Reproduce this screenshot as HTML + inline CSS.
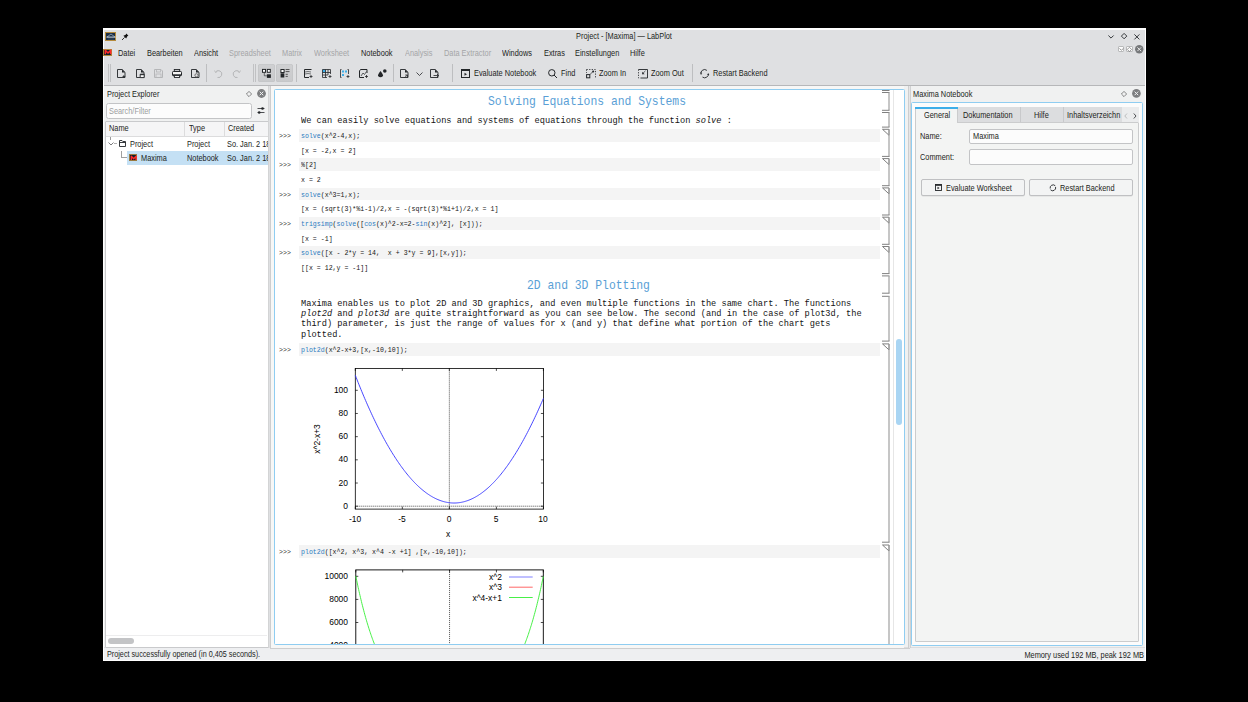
<!DOCTYPE html>
<html><head><meta charset="utf-8">
<style>
*{margin:0;padding:0;box-sizing:border-box}
html,body{width:1248px;height:702px;overflow:hidden;background:#000}
body{position:relative;font-family:"Liberation Sans",sans-serif;font-size:7.4px;color:#232629}
.a{position:absolute}
.t{position:absolute;white-space:pre;line-height:1}
.m{font-family:"Liberation Mono",monospace}
svg{position:absolute;overflow:visible}
</style></head><body>
<div class="a" style="left:103px;top:28px;width:1043px;height:633px;background:#ffffff;"></div>
<div class="a" style="left:104px;top:30px;width:1041px;height:55px;background:#dfe0e2;"></div>
<div class="a" style="left:104px;top:85px;width:1041px;height:1px;background:#b6b7b9;"></div>
<div class="a" style="left:104px;top:86px;width:1041px;height:561px;background:#f0f1f1;"></div>
<div class="a" style="left:104px;top:647px;width:1041px;height:1px;background:#dcdddf;"></div>
<div class="a" style="left:104px;top:648px;width:1041px;height:12px;background:#eeeff1;"></div>
<div class="a" style="left:105.3px;top:31.9px;width:10.8px;height:8.9px;background:#1d2f46;border:0.8px solid #b48a3c"></div>
<svg style="left:106px;top:32.5px;" width="10" height="8" viewBox="0 0 10 8"><path d="M1 4 L5 1 L9 4" fill="none" stroke="#9fb8d0" stroke-width="0.7"/><path d="M0.5 4.1 H9.5" stroke="#e8eef4" stroke-width="0.9"/><path d="M2 6 H8" stroke="#4a6079" stroke-width="0.5"/></svg>
<svg style="left:120.5px;top:32.5px;" width="8" height="8" viewBox="0 0 8 8"><path d="M5.3 0.6 L7.4 2.7 L6.3 3.3 L5.2 5.6 L2.4 2.8 L4.7 1.7 Z" fill="#111"/><path d="M3.6 4.4 L1 7" stroke="#222" stroke-width="0.9"/></svg>
<div class="t" style="left:624px;top:33.20px;font-size:8.2px;color:#1c1e21;transform-origin:50% 0;transform:translateX(-50%) scaleX(0.9);">Project - [Maxima] — LabPlot</div>
<svg style="left:1108px;top:34.6px;" width="7" height="5" viewBox="0 0 7 5"><path d="M0.4 0.5 L3 3.1 L5.6 0.5" fill="none" stroke="#232629" stroke-width="0.9"/></svg>
<svg style="left:1120.9px;top:33px;" width="7" height="7" viewBox="0 0 7 7"><path d="M3.1 0.4 L5.8 3.1 L3.1 5.8 L0.4 3.1 Z" fill="none" stroke="#232629" stroke-width="0.9"/></svg>
<svg style="left:1134.4px;top:33.7px;" width="7" height="7" viewBox="0 0 7 7"><path d="M0.4 0.4 L5.4 5.4 M5.4 0.4 L0.4 5.4" fill="none" stroke="#232629" stroke-width="0.9"/></svg>
<div class="a" style="left:103.2px;top:48.9px;width:8.8px;height:7.3px;background:#10202a;border:0.8px solid #b08a3c"></div>
<svg style="left:104.8px;top:50.3px;" width="6" height="5" viewBox="0 0 6 5"><path d="M0.3 4.3 V0.3 L3 3 L5.7 0.3 V4.3" fill="none" stroke="#ff2a2a" stroke-width="1.5" stroke-linejoin="round"/></svg>
<div class="t" style="left:117.6px;top:49.70px;font-size:8.2px;color:#1c1e21;transform-origin:0 0;transform:scaleX(0.9);">Datei</div>
<div class="t" style="left:146.5px;top:49.70px;font-size:8.2px;color:#1c1e21;transform-origin:0 0;transform:scaleX(0.9);">Bearbeiten</div>
<div class="t" style="left:193.7px;top:49.70px;font-size:8.2px;color:#1c1e21;transform-origin:0 0;transform:scaleX(0.9);">Ansicht</div>
<div class="t" style="left:229px;top:49.70px;font-size:8.2px;color:#a4a5a7;transform-origin:0 0;transform:scaleX(0.9);">Spreadsheet</div>
<div class="t" style="left:282px;top:49.70px;font-size:8.2px;color:#a4a5a7;transform-origin:0 0;transform:scaleX(0.9);">Matrix</div>
<div class="t" style="left:314px;top:49.70px;font-size:8.2px;color:#a4a5a7;transform-origin:0 0;transform:scaleX(0.9);">Worksheet</div>
<div class="t" style="left:361px;top:49.70px;font-size:8.2px;color:#1c1e21;transform-origin:0 0;transform:scaleX(0.9);">Notebook</div>
<div class="t" style="left:405px;top:49.70px;font-size:8.2px;color:#a4a5a7;transform-origin:0 0;transform:scaleX(0.9);">Analysis</div>
<div class="t" style="left:443.5px;top:49.70px;font-size:8.2px;color:#a4a5a7;transform-origin:0 0;transform:scaleX(0.9);">Data Extractor</div>
<div class="t" style="left:502px;top:49.70px;font-size:8.2px;color:#1c1e21;transform-origin:0 0;transform:scaleX(0.9);">Windows</div>
<div class="t" style="left:543.5px;top:49.70px;font-size:8.2px;color:#1c1e21;transform-origin:0 0;transform:scaleX(0.9);">Extras</div>
<div class="t" style="left:574.6px;top:49.70px;font-size:8.2px;color:#1c1e21;transform-origin:0 0;transform:scaleX(0.9);">Einstellungen</div>
<div class="t" style="left:630.4px;top:49.70px;font-size:8.2px;color:#1c1e21;transform-origin:0 0;transform:scaleX(0.9);">Hilfe</div>
<div class="a" style="left:1117.5px;top:45.6px;width:6.8px;height:6.9px;background:#fdfdfd;border:0.7px solid #b9babb;border-radius:1px"></div>
<svg style="left:1118.6px;top:47.6px;" width="5" height="3" viewBox="0 0 5 3"><path d="M0.4 0.5 L2.4 2.2 L4.4 0.5" fill="none" stroke="#808080" stroke-width="0.8"/></svg>
<div class="a" style="left:1126.2px;top:45.6px;width:6.9px;height:6.9px;background:#fdfdfd;border:0.7px solid #b9babb;border-radius:1px"></div>
<svg style="left:1127.2px;top:46.5px;" width="5" height="5" viewBox="0 0 5 5"><path d="M2.45 0.3 L4.6 2.45 L2.45 4.6 L0.3 2.45 Z" fill="none" stroke="#808080" stroke-width="0.8"/></svg>
<svg style="left:1135.2px;top:44.6px;" width="9" height="9" viewBox="0 0 9 9"><circle cx="4.25" cy="4.2" r="4.2" fill="#76787a"/><path d="M2.4 2.4 L6.1 6.1 M6.1 2.4 L2.4 6.1" stroke="#e8e8e8" stroke-width="1"/></svg>
<div class="a" style="left:108px;top:64px;width:1px;height:18px;background:#c0c1c3;"></div>
<div class="a" style="left:110px;top:64px;width:1px;height:18px;background:#c0c1c3;"></div>
<svg style="left:117px;top:69px;" width="9" height="9" viewBox="0 0 9 9"><path d="M0.5 0.5 H5.2 L8 3.3 V8.5 H0.5 Z" fill="none" stroke="#232629" stroke-width="0.9"/><path d="M5 0.5 L8 3.5 H5 Z" fill="#232629"/><path d="M6.8 6.2 V8.8 M5.5 7.5 H8.1" stroke="#232629" stroke-width="0.8"/></svg>
<svg style="left:135.8px;top:69px;" width="9" height="9" viewBox="0 0 9 9"><path d="M0.5 0.5 H5.2 L8 3.3 V8.5 H0.5 Z" fill="none" stroke="#232629" stroke-width="0.9"/><path d="M5 0.5 L8 3.5 H5 Z" fill="#232629"/><path d="M4.2 5.2 H8.2 V8.6 H4.2 Z" fill="#fff" stroke="#232629" stroke-width="0.9"/><path d="M4.2 5.2 H8.2 V6.2 H4.2 Z" fill="#232629"/></svg>
<svg style="left:153.5px;top:69px;" width="9" height="9" viewBox="0 0 9 9"><path d="M0.5 0.5 H7 L8.5 2 V8.5 H0.5 Z" fill="none" stroke="#b5b6b8" stroke-width="1"/><rect x="2.5" y="0.5" width="4" height="2.5" fill="none" stroke="#b5b6b8" stroke-width="0.8"/><rect x="2" y="5" width="5" height="3.5" fill="none" stroke="#b5b6b8" stroke-width="0.8"/></svg>
<svg style="left:171.7px;top:69px;" width="10" height="9" viewBox="0 0 10 9"><rect x="2.3" y="0.5" width="5.4" height="1.8" fill="none" stroke="#232629" stroke-width="0.9"/><rect x="0.5" y="2.5" width="9" height="4.3" fill="#f4f4f4" stroke="#232629" stroke-width="1" rx="0.8"/><rect x="1" y="5.3" width="8" height="1.6" fill="#232629"/><rect x="2.4" y="6.6" width="5.2" height="1.9" fill="#fff" stroke="#232629" stroke-width="0.9"/></svg>
<svg style="left:191px;top:69px;" width="9" height="9" viewBox="0 0 9 9"><path d="M0.5 0.5 H5.2 L8 3.3 V8.5 H0.5 Z" fill="none" stroke="#232629" stroke-width="0.9"/><path d="M5 0.5 L8 3.5 H5 Z" fill="#232629"/><circle cx="5.5" cy="6.3" r="1.6" fill="none" stroke="#555" stroke-width="0.8"/></svg>
<div class="a" style="left:206px;top:64px;width:1px;height:18px;background:#bdbec0;"></div>
<svg style="left:214px;top:69.5px;" width="8" height="8" viewBox="0 0 8 8"><path d="M1.5 2 A3.5 3.5 0 1 1 3.5 7.5" fill="none" stroke="#b5b6b8" stroke-width="1"/><path d="M0.5 0.5 L1.5 2.5 L3.5 1.5" fill="none" stroke="#b5b6b8" stroke-width="0.8"/></svg>
<svg style="left:232.5px;top:69.5px;" width="8" height="8" viewBox="0 0 8 8"><path d="M6.5 2 A3.5 3.5 0 1 0 4.5 7.5" fill="none" stroke="#b5b6b8" stroke-width="1"/><path d="M7.5 0.5 L6.5 2.5 L4.5 1.5" fill="none" stroke="#b5b6b8" stroke-width="0.8"/></svg>
<div class="a" style="left:253px;top:64px;width:1px;height:18px;background:#c0c1c3;"></div>
<div class="a" style="left:255px;top:64px;width:1px;height:18px;background:#c0c1c3;"></div>
<div class="a" style="left:258.2px;top:64.3px;width:16.4px;height:17.4px;background:linear-gradient(#cfd0d2,#c9cacc);border-radius:2.5px;box-shadow:inset 0 0 0 0.6px #c2c3c5"></div>
<div class="a" style="left:276.2px;top:64.3px;width:17.2px;height:17.4px;background:linear-gradient(#cfd0d2,#c9cacc);border-radius:2.5px;box-shadow:inset 0 0 0 0.6px #c2c3c5"></div>
<svg style="left:262px;top:69px;" width="10" height="9" viewBox="0 0 10 9"><rect x="0.5" y="0.4" width="3" height="2.9" fill="#fff" stroke="#232629" stroke-width="1"/><rect x="5.3" y="0.4" width="3" height="2.9" fill="#fff" stroke="#232629" stroke-width="1"/><rect x="4.9" y="5.3" width="4" height="3.6" fill="#232629"/><path d="M2.3 3.4 V6.8 H4.9" fill="none" stroke="#232629" stroke-width="0.6"/></svg>
<svg style="left:280px;top:69px;" width="10" height="9" viewBox="0 0 10 9"><rect x="0.9" y="0.5" width="3.2" height="3" fill="#fff" stroke="#232629" stroke-width="1"/><rect x="0.6" y="4.3" width="3.7" height="4.2" fill="#232629"/><path d="M5.6 0.5 H9.5 M5.6 2.6 H9.5 M5.6 5.3 H7.8 M5.6 7.4 H7.8" stroke="#333" stroke-width="0.8"/></svg>
<div class="a" style="left:296px;top:64px;width:1px;height:18px;background:#bdbec0;"></div>
<svg style="left:303px;top:69px;" width="10" height="9" viewBox="0 0 10 9"><path d="M1.5 0.5 H8.5 M1.5 0.5 V8.5 H6" fill="none" stroke="#232629" stroke-width="1"/><path d="M2 3 Q5 2 8 3 M2 5 Q5 4 8 5" fill="none" stroke="#232629" stroke-width="0.6"/><path d="M8 6 V9 M6.5 7.5 H9.5" stroke="#232629" stroke-width="0.8"/></svg>
<svg style="left:321.5px;top:69px;" width="10" height="9" viewBox="0 0 10 9"><rect x="0.5" y="0.5" width="3" height="3" fill="#3daee9"/><path d="M0.5 0.5 H8.5 V5 M0.5 0.5 V8.5 H5 M0.5 3.5 H8.5 M0.5 6 H6 M3.5 0.5 V8.5 M6 0.5 V6" fill="none" stroke="#232629" stroke-width="0.8"/><path d="M8 6 V9 M6.5 7.5 H9.5" stroke="#232629" stroke-width="0.8"/></svg>
<svg style="left:340px;top:69px;" width="10" height="9" viewBox="0 0 10 9"><path d="M1.5 0.5 H0.5 V8.5 H1.5 M7.5 0.5 H8.5 V5" fill="none" stroke="#232629" stroke-width="0.8"/><rect x="2" y="1.5" width="2" height="2" fill="#3daee9"/><rect x="5" y="1.5" width="2" height="2" fill="#3daee9"/><rect x="2" y="5" width="2" height="2" fill="#3daee9"/><path d="M8 6 V9 M6.5 7.5 H9.5" stroke="#232629" stroke-width="0.8"/></svg>
<svg style="left:358px;top:69px;" width="10" height="9" viewBox="0 0 10 9"><path d="M1.5 8.5 V2 L2.5 0.5 H9 V4 M1.5 8.5 H6" fill="none" stroke="#232629" stroke-width="1"/><path d="M3 7 L5 4 L6.5 5.5 L8.5 2.5" fill="none" stroke="#232629" stroke-width="0.7"/><path d="M8.5 6 V9 M7 7.5 H10" stroke="#232629" stroke-width="0.8"/></svg>
<svg style="left:376.5px;top:69px;" width="10" height="9" viewBox="0 0 10 9"><path d="M3.5 2 Q0.5 6 1 7 Q3.5 9.5 6 7 Q6.5 6 3.5 2 Z" fill="#232629"/><circle cx="7.8" cy="2" r="1.8" fill="#232629"/></svg>
<div class="a" style="left:393px;top:64px;width:1px;height:18px;background:#bdbec0;"></div>
<svg style="left:400px;top:69px;" width="9" height="9" viewBox="0 0 9 9"><path d="M0.5 0.5 H5.2 L8 3.3 V8.5 H0.5 Z" fill="none" stroke="#232629" stroke-width="0.9"/><path d="M5 0.5 L8 3.5 H5 Z" fill="#232629"/><path d="M4.5 8.8 L7.5 5.8 M5.2 6 H7.5 V8.2" fill="none" stroke="#232629" stroke-width="0.8"/></svg>
<svg style="left:416px;top:71.5px;" width="7" height="4" viewBox="0 0 7 4"><path d="M0.5 0.5 L3.5 3.5 L6.5 0.5" fill="none" stroke="#232629" stroke-width="0.8"/></svg>
<svg style="left:429.5px;top:69px;" width="9" height="9" viewBox="0 0 9 9"><path d="M0.5 0.5 H5.2 L8 3.3 V8.5 H0.5 Z" fill="none" stroke="#232629" stroke-width="0.9"/><path d="M5 0.5 L8 3.5 H5 Z" fill="#232629"/><path d="M3.5 6.5 H8.5 M7 5 L8.5 6.5 L7 8" fill="none" stroke="#232629" stroke-width="0.8"/></svg>
<div class="a" style="left:452px;top:64px;width:1px;height:18px;background:#bdbec0;"></div>
<svg style="left:461px;top:69px;" width="9" height="9" viewBox="0 0 9 9"><rect x="0.5" y="0.5" width="8" height="8" fill="none" stroke="#232629" stroke-width="1"/><rect x="0.5" y="0.5" width="8" height="1.5" fill="#232629"/><path d="M3.5 3.8 L6 5.3 L3.5 6.8 Z" fill="#232629"/></svg>
<div class="t" style="left:474px;top:69.80px;font-size:8.2px;color:#1c1e21;transform-origin:0 0;transform:scaleX(0.9);">Evaluate Notebook</div>
<svg style="left:547.5px;top:69px;" width="10" height="10" viewBox="0 0 10 10"><circle cx="3.8" cy="3.8" r="3.2" fill="none" stroke="#232629" stroke-width="1"/><path d="M6 6 L9 9" stroke="#232629" stroke-width="1"/></svg>
<div class="t" style="left:560.6px;top:69.80px;font-size:8.2px;color:#1c1e21;transform-origin:0 0;transform:scaleX(0.9);">Find</div>
<svg style="left:586px;top:69px;" width="10" height="10" viewBox="0 0 10 10"><path d="M0.5 0.5 H9.5 V9" fill="none" stroke="#232629" stroke-width="0.8" stroke-dasharray="1.3,1.3"/><path d="M0.5 0.5 V4" fill="none" stroke="#232629" stroke-width="0.8" stroke-dasharray="1.3,1.3"/><rect x="0.6" y="5.6" width="3.2" height="3.2" fill="none" stroke="#232629" stroke-width="1"/><path d="M4.2 5.2 L7 2.6" stroke="#232629" stroke-width="0.7"/><circle cx="7.2" cy="2.5" r="1" fill="#232629"/></svg>
<div class="t" style="left:599px;top:69.80px;font-size:8.2px;color:#1c1e21;transform-origin:0 0;transform:scaleX(0.9);">Zoom In</div>
<svg style="left:638px;top:69px;" width="10" height="10" viewBox="0 0 10 10"><path d="M0.5 0.5 H9.5 V9 H3" fill="none" stroke="#232629" stroke-width="0.9"/><path d="M0.5 0.5 V9 H3" fill="none" stroke="#232629" stroke-width="0.8" stroke-dasharray="1.3,1.3"/><path d="M7.5 1.8 L4.6 4.7" stroke="#232629" stroke-width="0.7"/><path d="M4.2 2.8 V5.2 H6.6 Z" fill="#232629"/></svg>
<div class="t" style="left:651px;top:69.80px;font-size:8.2px;color:#1c1e21;transform-origin:0 0;transform:scaleX(0.9);">Zoom Out</div>
<div class="a" style="left:692px;top:64px;width:1px;height:18px;background:#bdbec0;"></div>
<svg style="left:700px;top:68.8px;" width="10" height="10" viewBox="0 0 10 10"><path d="M1.1 5.6 A3.7 3.7 0 0 1 6.9 1.4" fill="none" stroke="#232629" stroke-width="0.9"/><path d="M8.3 4.4 A3.7 3.7 0 0 1 2.5 8.1" fill="none" stroke="#232629" stroke-width="0.9"/><path d="M7.2 5 L8.3 6.6 L9.3 5 Z" fill="#232629"/><path d="M0.2 4.6 L1.1 3 L2.2 4.6 Z" fill="#232629"/></svg>
<div class="t" style="left:713px;top:69.80px;font-size:8.2px;color:#1c1e21;transform-origin:0 0;transform:scaleX(0.9);">Restart Backend</div>
<div class="t" style="left:107px;top:91.00px;font-size:8.2px;color:#1c1e21;transform-origin:0 0;transform:scaleX(0.9);">Project Explorer</div>
<svg style="left:245.5px;top:90.6px;" width="6" height="6" viewBox="0 0 6 6"><path d="M3 0.4 L5.6 3 L3 5.6 L0.4 3 Z" fill="none" stroke="#3a3b3d" stroke-width="0.6"/></svg>
<svg style="left:256.5px;top:89px;" width="9" height="9" viewBox="0 0 9 9"><circle cx="4.5" cy="4.5" r="4.4" fill="#7d7e80"/><path d="M2.7 2.7 L6.3 6.3 M6.3 2.7 L2.7 6.3" stroke="#eff0f1" stroke-width="1"/></svg>
<div class="a" style="left:105.5px;top:102.5px;width:146px;height:16px;background:#fcfcfc;border:1px solid #c3c4c6;border-radius:2.5px"></div>
<div class="t" style="left:108.7px;top:107.60px;font-size:8.2px;color:#9b9c9e;transform-origin:0 0;transform:scaleX(0.9);">Search/Filter</div>
<svg style="left:256.5px;top:107px;" width="8" height="8" viewBox="0 0 8 8"><path d="M0.5 1.5 H7.5 M0.5 5.5 H7.5" stroke="#232629" stroke-width="0.8"/><circle cx="5.5" cy="1.5" r="1.3" fill="#232629"/><circle cx="2.2" cy="5.5" r="1.3" fill="#232629"/></svg>
<div class="a" style="left:104.5px;top:120.5px;width:164px;height:527px;background:#ffffff;border:1px solid #c9cacc;border-radius:1px"></div>
<div class="a" style="left:105.5px;top:121.5px;width:162px;height:15px;background:#f5f5f6;"></div>
<div class="a" style="left:105.5px;top:136px;width:162px;height:1px;background:#dcdcdd;"></div>
<div class="a" style="left:184px;top:122px;width:1px;height:14px;background:#dcdcdd;"></div>
<div class="a" style="left:224px;top:122px;width:1px;height:14px;background:#dcdcdd;"></div>
<div class="t" style="left:108.8px;top:125.40px;font-size:8.2px;color:#1c1e21;transform-origin:0 0;transform:scaleX(0.9);">Name</div>
<div class="t" style="left:188.7px;top:125.40px;font-size:8.2px;color:#1c1e21;transform-origin:0 0;transform:scaleX(0.9);">Type</div>
<div class="t" style="left:228px;top:125.40px;font-size:8.2px;color:#1c1e21;transform-origin:0 0;transform:scaleX(0.9);">Created</div>
<div class="a" style="left:110px;top:137px;width:0.8px;height:3px;background:#9a9a9a;"></div>
<svg style="left:108px;top:142px;" width="6" height="4" viewBox="0 0 6 4"><path d="M0.5 0.5 L3 3 L5.5 0.5" fill="none" stroke="#5a5b5d" stroke-width="0.8"/></svg>
<div class="a" style="left:113.5px;top:143px;width:3px;height:0.8px;background:#b0b0b0;"></div>
<svg style="left:119px;top:140px;" width="7" height="7" viewBox="0 0 7 7"><path d="M0.5 6.5 V0.5 H3 L3.8 1.5 H6.5 V6.5 Z M0.5 2.5 H6.5" fill="none" stroke="#232629" stroke-width="0.9"/></svg>
<div class="t" style="left:130px;top:141.40px;font-size:8.2px;color:#1c1e21;transform-origin:0 0;transform:scaleX(0.9);">Project</div>
<div class="t" style="left:186.6px;top:141.40px;font-size:8.2px;color:#1c1e21;transform-origin:0 0;transform:scaleX(0.9);">Project</div>
<div class="a" style="left:127px;top:151px;width:140.5px;height:13.7px;background:#c4e0f4;"></div>
<div class="a" style="left:121px;top:151px;width:0.8px;height:6.5px;background:#a0a0a0;"></div>
<div class="a" style="left:121px;top:157px;width:6px;height:0.8px;background:#a0a0a0;"></div>
<div class="a" style="left:129px;top:154.2px;width:8.3px;height:7.3px;background:#10202a;border:0.8px solid #9a7a40"></div>
<svg style="left:130.6px;top:155.6px;" width="6" height="5" viewBox="0 0 6 5"><path d="M0.3 4 V0.3 L2.7 2.8 L5.1 0.3 V4" fill="none" stroke="#ff2a2a" stroke-width="1.4" stroke-linejoin="round"/></svg>
<div class="t" style="left:141px;top:155.40px;font-size:8.2px;color:#1c1e21;transform-origin:0 0;transform:scaleX(0.9);">Maxima</div>
<div class="t" style="left:186.6px;top:155.40px;font-size:8.2px;color:#1c1e21;transform-origin:0 0;transform:scaleX(0.9);">Notebook</div>
<div class="a" style="left:0;top:0;width:267.7px;height:702px;overflow:hidden">
<div class="t" style="left:226.7px;top:141.40px;font-size:8.2px;color:#1c1e21;transform-origin:0 0;transform:scaleX(0.9);">So. Jan. 2 18:</div>
<div class="t" style="left:226.7px;top:155.40px;font-size:8.2px;color:#1c1e21;transform-origin:0 0;transform:scaleX(0.9);">So. Jan. 2 18:</div>
</div>
<div class="a" style="left:106px;top:634.5px;width:161px;height:1px;background:#ededee;"></div>
<div class="a" style="left:107.8px;top:638px;width:26.2px;height:5.6px;background:#c3c4c6;border-radius:3px"></div>
<div class="a" style="left:270.3px;top:86px;width:634px;height:562px;background:#f7f7f6;"></div>
<div class="a" style="left:268.2px;top:86px;width:1px;height:562px;background:#d3d4d5;"></div>
<div class="a" style="left:269.2px;top:86px;width:1px;height:562px;background:#dfe0e2;"></div>
<div class="a" style="left:270.2px;top:86px;width:1px;height:562px;background:#cdcecf;"></div>
<div class="a" style="left:270.2px;top:647.5px;width:640px;height:1px;background:#cdcecf;"></div>
<div class="a" style="left:908px;top:86px;width:1px;height:562px;background:#cdcecf;"></div>
<div class="a" style="left:909px;top:86px;width:1px;height:562px;background:#e6e6e7;"></div>
<div class="a" style="left:910px;top:86px;width:1px;height:562px;background:#d0d1d2;"></div>
<div class="a" style="left:274.3px;top:89.3px;width:630.8px;height:555.5px;background:#fff;border:1px solid #8fcdf1;border-radius:1.5px"></div>
<div class="t m" style="left:488.3px;top:96.00px;font-size:12.522px;color:#5a9fd6;transform-origin:0 0;transform:scaleX(0.9091);">Solving Equations and Systems</div>
<div class="t m" style="left:301px;top:115.50px;font-size:9.533px;color:#141414;transform-origin:0 0;transform:scaleX(0.9091);">We can easily solve equations and systems of equations through the function <i>solve</i> :</div>
<div class="a" style="left:299.2px;top:129.1px;width:580.8px;height:12.6px;background:#f4f4f4;"></div>
<div class="t m" style="left:279px;top:133.10px;font-size:7.242px;color:#303030;transform-origin:0 0;transform:scaleX(0.9091);">&gt;&gt;&gt;</div>
<div class="t m" style="left:301.3px;top:133.10px;font-size:7.242px;color:#141414;transform-origin:0 0;transform:scaleX(0.9091);"><span style="color:#2b7bbf">solve</span>(x^2-4,x);</div>
<div class="t m" style="left:301.3px;top:147.80px;font-size:7.242px;color:#141414;transform-origin:0 0;transform:scaleX(0.9091);">[x = -2,x = 2]</div>
<div class="a" style="left:299.2px;top:158.4px;width:580.8px;height:12.6px;background:#f4f4f4;"></div>
<div class="t m" style="left:279px;top:162.40px;font-size:7.242px;color:#303030;transform-origin:0 0;transform:scaleX(0.9091);">&gt;&gt;&gt;</div>
<div class="t m" style="left:301.3px;top:162.40px;font-size:7.242px;color:#141414;transform-origin:0 0;transform:scaleX(0.9091);">%[2]</div>
<div class="t m" style="left:301.3px;top:177.10px;font-size:7.242px;color:#141414;transform-origin:0 0;transform:scaleX(0.9091);">x = 2</div>
<div class="a" style="left:299.2px;top:187.7px;width:580.8px;height:12.6px;background:#f4f4f4;"></div>
<div class="t m" style="left:279px;top:191.70px;font-size:7.242px;color:#303030;transform-origin:0 0;transform:scaleX(0.9091);">&gt;&gt;&gt;</div>
<div class="t m" style="left:301.3px;top:191.70px;font-size:7.242px;color:#141414;transform-origin:0 0;transform:scaleX(0.9091);"><span style="color:#2b7bbf">solve</span>(x^3=1,x);</div>
<div class="t m" style="left:301.3px;top:206.40px;font-size:7.242px;color:#141414;transform-origin:0 0;transform:scaleX(0.9091);">[x = (sqrt(3)*%i-1)/2,x = -(sqrt(3)*%i+1)/2,x = 1]</div>
<div class="a" style="left:299.2px;top:217.0px;width:580.8px;height:12.6px;background:#f4f4f4;"></div>
<div class="t m" style="left:279px;top:221.00px;font-size:7.242px;color:#303030;transform-origin:0 0;transform:scaleX(0.9091);">&gt;&gt;&gt;</div>
<div class="t m" style="left:301.3px;top:221.00px;font-size:7.242px;color:#141414;transform-origin:0 0;transform:scaleX(0.9091);"><span style="color:#2b7bbf">trigsimp</span>(<span style="color:#2b7bbf">solve</span>([<span style="color:#2b7bbf">cos</span>(x)^2-x=2-<span style="color:#2b7bbf">sin</span>(x)^2], [x]));</div>
<div class="t m" style="left:301.3px;top:235.70px;font-size:7.242px;color:#141414;transform-origin:0 0;transform:scaleX(0.9091);">[x = -1]</div>
<div class="a" style="left:299.2px;top:246.3px;width:580.8px;height:12.6px;background:#f4f4f4;"></div>
<div class="t m" style="left:279px;top:250.30px;font-size:7.242px;color:#303030;transform-origin:0 0;transform:scaleX(0.9091);">&gt;&gt;&gt;</div>
<div class="t m" style="left:301.3px;top:250.30px;font-size:7.242px;color:#141414;transform-origin:0 0;transform:scaleX(0.9091);"><span style="color:#2b7bbf">solve</span>([x - 2*y = 14,  x + 3*y = 9],[x,y]);</div>
<div class="t m" style="left:301.3px;top:265.00px;font-size:7.242px;color:#141414;transform-origin:0 0;transform:scaleX(0.9091);">[[x = 12,y = -1]]</div>
<div class="t m" style="left:526.5px;top:279.60px;font-size:12.522px;color:#5a9fd6;transform-origin:0 0;transform:scaleX(0.9091);">2D and 3D Plotting</div>
<div class="t m" style="left:301.25px;top:298.60px;font-size:9.533px;color:#141414;transform-origin:0 0;transform:scaleX(0.9091);">Maxima enables us to plot 2D and 3D graphics, and even multiple functions in the same chart. The functions</div>
<div class="t m" style="left:301.25px;top:309.00px;font-size:9.533px;color:#141414;transform-origin:0 0;transform:scaleX(0.9091);"><i>plot2d</i> and <i>plot3d</i> are quite straightforward as you can see below. The second (and in the case of plot3d, the</div>
<div class="t m" style="left:301.25px;top:319.40px;font-size:9.533px;color:#141414;transform-origin:0 0;transform:scaleX(0.9091);">third) parameter, is just the range of values for x (and y) that define what portion of the chart gets</div>
<div class="t m" style="left:301.25px;top:329.80px;font-size:9.533px;color:#141414;transform-origin:0 0;transform:scaleX(0.9091);">plotted.</div>
<div class="a" style="left:299.2px;top:343.4px;width:580.8px;height:12.6px;background:#f4f4f4;"></div>
<div class="t m" style="left:279px;top:346.70px;font-size:7.242px;color:#303030;transform-origin:0 0;transform:scaleX(0.9091);">&gt;&gt;&gt;</div>
<div class="t m" style="left:301.3px;top:346.70px;font-size:7.242px;color:#141414;transform-origin:0 0;transform:scaleX(0.9091);"><span style="color:#2b7bbf">plot2d</span>(x^2-x+3,[x,-10,10]);</div>
<div class="a" style="left:299.2px;top:545px;width:580.8px;height:12.6px;background:#f4f4f4;"></div>
<div class="t m" style="left:279px;top:548.70px;font-size:7.242px;color:#303030;transform-origin:0 0;transform:scaleX(0.9091);">&gt;&gt;&gt;</div>
<div class="t m" style="left:301.3px;top:548.70px;font-size:7.242px;color:#141414;transform-origin:0 0;transform:scaleX(0.9091);"><span style="color:#2b7bbf">plot2d</span>([x^2, x^3, x^4 -x +1] ,[x,-10,10]);</div>
<svg style="left:0px;top:0px;clip-path:inset(0 0 57px 0)" width="1248" height="702" viewBox="0 0 1248 702"><rect x="355.3" y="368.4" width="188.09999999999997" height="140.70000000000005" fill="none" stroke="#000" stroke-width="0.8"/><line x1="449.35" y1="368.4" x2="449.35" y2="509.1" stroke="#000" stroke-width="0.7" stroke-dasharray="1,1"/><line x1="355.3" y1="506.2" x2="543.4" y2="506.2" stroke="#000" stroke-width="0.7" stroke-dasharray="1,1"/><line x1="355.3" y1="506.2" x2="357.8" y2="506.2" stroke="#000" stroke-width="0.7"/><line x1="540.9" y1="506.2" x2="543.4" y2="506.2" stroke="#000" stroke-width="0.7"/><line x1="355.3" y1="483.02" x2="357.8" y2="483.02" stroke="#000" stroke-width="0.7"/><line x1="540.9" y1="483.02" x2="543.4" y2="483.02" stroke="#000" stroke-width="0.7"/><line x1="355.3" y1="459.84" x2="357.8" y2="459.84" stroke="#000" stroke-width="0.7"/><line x1="540.9" y1="459.84" x2="543.4" y2="459.84" stroke="#000" stroke-width="0.7"/><line x1="355.3" y1="436.66" x2="357.8" y2="436.66" stroke="#000" stroke-width="0.7"/><line x1="540.9" y1="436.66" x2="543.4" y2="436.66" stroke="#000" stroke-width="0.7"/><line x1="355.3" y1="413.48" x2="357.8" y2="413.48" stroke="#000" stroke-width="0.7"/><line x1="540.9" y1="413.48" x2="543.4" y2="413.48" stroke="#000" stroke-width="0.7"/><line x1="355.3" y1="390.3" x2="357.8" y2="390.3" stroke="#000" stroke-width="0.7"/><line x1="540.9" y1="390.3" x2="543.4" y2="390.3" stroke="#000" stroke-width="0.7"/><line x1="355.3" y1="368.4" x2="355.3" y2="370.9" stroke="#000" stroke-width="0.7"/><line x1="355.3" y1="506.6" x2="355.3" y2="509.1" stroke="#000" stroke-width="0.7"/><line x1="402.325" y1="368.4" x2="402.325" y2="370.9" stroke="#000" stroke-width="0.7"/><line x1="402.325" y1="506.6" x2="402.325" y2="509.1" stroke="#000" stroke-width="0.7"/><line x1="449.35" y1="368.4" x2="449.35" y2="370.9" stroke="#000" stroke-width="0.7"/><line x1="449.35" y1="506.6" x2="449.35" y2="509.1" stroke="#000" stroke-width="0.7"/><line x1="496.375" y1="368.4" x2="496.375" y2="370.9" stroke="#000" stroke-width="0.7"/><line x1="496.375" y1="506.6" x2="496.375" y2="509.1" stroke="#000" stroke-width="0.7"/><line x1="543.4" y1="368.4" x2="543.4" y2="370.9" stroke="#000" stroke-width="0.7"/><line x1="543.4" y1="506.6" x2="543.4" y2="509.1" stroke="#000" stroke-width="0.7"/><polyline points="355.30,375.23 356.24,377.66 357.18,380.05 358.12,382.43 359.06,384.78 360.00,387.11 360.94,389.42 361.88,391.70 362.82,393.96 363.76,396.20 364.70,398.41 365.65,400.60 366.59,402.77 367.53,404.91 368.47,407.04 369.41,409.13 370.35,411.21 371.29,413.26 372.23,415.29 373.17,417.29 374.11,419.27 375.05,421.23 375.99,423.17 376.93,425.08 377.87,426.97 378.81,428.84 379.75,430.68 380.69,432.50 381.63,434.30 382.57,436.07 383.51,437.82 384.46,439.55 385.40,441.25 386.34,442.93 387.28,444.59 388.22,446.22 389.16,447.83 390.10,449.42 391.04,450.99 391.98,452.53 392.92,454.05 393.86,455.54 394.80,457.01 395.74,458.46 396.68,459.89 397.62,461.29 398.56,462.67 399.50,464.02 400.44,465.36 401.38,466.67 402.32,467.95 403.27,469.22 404.21,470.46 405.15,471.67 406.09,472.87 407.03,474.04 407.97,475.19 408.91,476.31 409.85,477.41 410.79,478.49 411.73,479.54 412.67,480.57 413.61,481.58 414.55,482.57 415.49,483.53 416.43,484.47 417.37,485.38 418.31,486.28 419.25,487.15 420.19,487.99 421.13,488.81 422.08,489.61 423.02,490.39 423.96,491.14 424.90,491.87 425.84,492.58 426.78,493.27 427.72,493.93 428.66,494.56 429.60,495.18 430.54,495.77 431.48,496.34 432.42,496.88 433.36,497.40 434.30,497.90 435.24,498.38 436.18,498.83 437.12,499.26 438.06,499.66 439.00,500.05 439.94,500.40 440.89,500.74 441.83,501.05 442.77,501.34 443.71,501.61 444.65,501.85 445.59,502.07 446.53,502.27 447.47,502.44 448.41,502.60 449.35,502.72 450.29,502.83 451.23,502.91 452.17,502.97 453.11,503.00 454.05,503.01 454.99,503.00 455.93,502.97 456.87,502.91 457.81,502.83 458.75,502.72 459.70,502.60 460.64,502.44 461.58,502.27 462.52,502.07 463.46,501.85 464.40,501.61 465.34,501.34 466.28,501.05 467.22,500.74 468.16,500.40 469.10,500.05 470.04,499.66 470.98,499.26 471.92,498.83 472.86,498.38 473.80,497.90 474.74,497.40 475.68,496.88 476.62,496.34 477.56,495.77 478.51,495.18 479.45,494.56 480.39,493.93 481.33,493.27 482.27,492.58 483.21,491.87 484.15,491.14 485.09,490.39 486.03,489.61 486.97,488.81 487.91,487.99 488.85,487.15 489.79,486.28 490.73,485.38 491.67,484.47 492.61,483.53 493.55,482.57 494.49,481.58 495.43,480.57 496.38,479.54 497.32,478.49 498.26,477.41 499.20,476.31 500.14,475.19 501.08,474.04 502.02,472.87 502.96,471.67 503.90,470.46 504.84,469.22 505.78,467.95 506.72,466.67 507.66,465.36 508.60,464.02 509.54,462.67 510.48,461.29 511.42,459.89 512.36,458.46 513.30,457.01 514.24,455.54 515.18,454.05 516.13,452.53 517.07,450.99 518.01,449.42 518.95,447.83 519.89,446.22 520.83,444.59 521.77,442.93 522.71,441.25 523.65,439.55 524.59,437.82 525.53,436.07 526.47,434.30 527.41,432.50 528.35,430.68 529.29,428.84 530.23,426.97 531.17,425.08 532.11,423.17 533.05,421.23 534.00,419.27 534.94,417.29 535.88,415.29 536.82,413.26 537.76,411.21 538.70,409.13 539.64,407.04 540.58,404.91 541.52,402.77 542.46,400.60 543.40,398.41" fill="none" stroke="#3333ff" stroke-width="0.9"/></svg>
<div class="t" style="left:347.8px;top:501.80px;font-size:9.1px;color:#000;transform-origin:100% 0;transform:translateX(-100%) scaleX(0.93);">0</div>
<div class="t" style="left:347.8px;top:478.62px;font-size:9.1px;color:#000;transform-origin:100% 0;transform:translateX(-100%) scaleX(0.93);">20</div>
<div class="t" style="left:347.8px;top:455.44px;font-size:9.1px;color:#000;transform-origin:100% 0;transform:translateX(-100%) scaleX(0.93);">40</div>
<div class="t" style="left:347.8px;top:432.26px;font-size:9.1px;color:#000;transform-origin:100% 0;transform:translateX(-100%) scaleX(0.93);">60</div>
<div class="t" style="left:347.8px;top:409.08px;font-size:9.1px;color:#000;transform-origin:100% 0;transform:translateX(-100%) scaleX(0.93);">80</div>
<div class="t" style="left:347.8px;top:385.90px;font-size:9.1px;color:#000;transform-origin:100% 0;transform:translateX(-100%) scaleX(0.93);">100</div>
<div class="t" style="left:354.6px;top:515.40px;font-size:9.1px;color:#000;transform-origin:50% 0;transform:translateX(-50%) scaleX(0.93);">-10</div>
<div class="t" style="left:401.625px;top:515.40px;font-size:9.1px;color:#000;transform-origin:50% 0;transform:translateX(-50%) scaleX(0.93);">-5</div>
<div class="t" style="left:448.65000000000003px;top:515.40px;font-size:9.1px;color:#000;transform-origin:50% 0;transform:translateX(-50%) scaleX(0.93);">0</div>
<div class="t" style="left:495.675px;top:515.40px;font-size:9.1px;color:#000;transform-origin:50% 0;transform:translateX(-50%) scaleX(0.93);">5</div>
<div class="t" style="left:542.6999999999999px;top:515.40px;font-size:9.1px;color:#000;transform-origin:50% 0;transform:translateX(-50%) scaleX(0.93);">10</div>
<div class="t" style="left:448px;top:530.40px;font-size:9.1px;color:#000;transform-origin:50% 0;transform:translateX(-50%) scaleX(0.93);">x</div>
<div class="t" style="left:318.4px;top:439px;font-size:9.1px;color:#000;transform:translate(-50%,-50%) rotate(-90deg) scaleX(0.93)">x^2-x+3</div>
<div class="a" style="left:0;top:0;width:1248px;height:644px;overflow:hidden">
<svg style="left:0px;top:0px;" width="1248" height="702" viewBox="0 0 1248 702"><rect x="355.8" y="569.9" width="187.49999999999994" height="200" fill="none" stroke="#000" stroke-width="0.9"/><line x1="449.54999999999995" y1="569.9" x2="449.54999999999995" y2="700" stroke="#000" stroke-width="0.7" stroke-dasharray="1,1"/><line x1="355.8" y1="569.9" x2="355.8" y2="572.4" stroke="#000" stroke-width="0.7"/><line x1="402.675" y1="569.9" x2="402.675" y2="572.4" stroke="#000" stroke-width="0.7"/><line x1="449.54999999999995" y1="569.9" x2="449.54999999999995" y2="572.4" stroke="#000" stroke-width="0.7"/><line x1="496.42499999999995" y1="569.9" x2="496.42499999999995" y2="572.4" stroke="#000" stroke-width="0.7"/><line x1="543.3" y1="569.9" x2="543.3" y2="572.4" stroke="#000" stroke-width="0.7"/><line x1="355.8" y1="576.3" x2="358.3" y2="576.3" stroke="#000" stroke-width="0.7"/><line x1="540.8" y1="576.3" x2="543.3" y2="576.3" stroke="#000" stroke-width="0.7"/><line x1="355.8" y1="599.4" x2="358.3" y2="599.4" stroke="#000" stroke-width="0.7"/><line x1="540.8" y1="599.4" x2="543.3" y2="599.4" stroke="#000" stroke-width="0.7"/><line x1="355.8" y1="622.5" x2="358.3" y2="622.5" stroke="#000" stroke-width="0.7"/><line x1="540.8" y1="622.5" x2="543.3" y2="622.5" stroke="#000" stroke-width="0.7"/><line x1="355.8" y1="645.6" x2="358.3" y2="645.6" stroke="#000" stroke-width="0.7"/><line x1="540.8" y1="645.6" x2="543.3" y2="645.6" stroke="#000" stroke-width="0.7"/><polyline points="355.80,576.17 356.27,578.47 356.74,580.73 357.21,582.95 357.68,585.14 358.14,587.30 358.61,589.43 359.08,591.52 359.55,593.58 360.02,595.61 360.49,597.60 360.96,599.57 361.43,601.50 361.89,603.41 362.36,605.28 362.83,607.12 363.30,608.94 363.77,610.72 364.24,612.48 364.71,614.21 365.18,615.90 365.64,617.58 366.11,619.22 366.58,620.83 367.05,622.42 367.52,623.98 367.99,625.52 368.46,627.03 368.93,628.51 369.39,629.97 369.86,631.40 370.33,632.81 370.80,634.19 371.27,635.54 371.74,636.88 372.21,638.19 372.68,639.47 373.14,640.74 373.61,641.98 374.08,643.19 374.55,644.39 375.02,645.56 375.49,646.71 375.96,647.84 376.43,648.95 376.89,650.03 377.36,651.10 377.83,652.14 378.30,653.17 378.77,654.17 379.24,655.16 379.71,656.12 380.18,657.07 380.64,658.00 381.11,658.90 381.58,659.79 382.05,660.67 382.52,661.52 382.99,662.36 383.46,663.17 383.93,663.98 384.39,664.76 384.86,665.53 385.33,666.28 385.80,667.01 386.27,667.73 386.74,668.44 387.21,669.12 387.68,669.80 388.14,670.45 388.61,671.10 389.08,671.72 389.55,672.34 390.02,672.94 390.49,673.52 390.96,674.09 391.43,674.65 391.89,675.19 392.36,675.73 392.83,676.24 393.30,676.75 393.77,677.24 394.24,677.72 394.71,678.19 395.18,678.65 395.64,679.10 396.11,679.53 396.58,679.95 397.05,680.36 397.52,680.77 397.99,681.16 398.46,681.54 398.93,681.91 399.39,682.26 399.86,682.61 400.33,682.95 400.80,683.28 401.27,683.60 401.74,683.92 402.21,684.22 402.68,684.51 403.14,684.80 403.61,685.07 404.08,685.34 404.55,685.60 405.02,685.85 405.49,686.10 405.96,686.33 406.43,686.56 406.89,686.79 407.36,687.00 407.83,687.21 408.30,687.41 408.77,687.60 409.24,687.79 409.71,687.97 410.18,688.15 410.64,688.31 411.11,688.48 411.58,688.63 412.05,688.79 412.52,688.93 412.99,689.07 413.46,689.21 413.93,689.34 414.39,689.46 414.86,689.58 415.33,689.70 415.80,689.81 416.27,689.91 416.74,690.01 417.21,690.11 417.68,690.21 418.14,690.30 418.61,690.38 419.08,690.46 419.55,690.54 420.02,690.61 420.49,690.69 420.96,690.75 421.42,690.82 421.89,690.88 422.36,690.94 422.83,690.99 423.30,691.05 423.77,691.10 424.24,691.14 424.71,691.19 425.17,691.23 425.64,691.27 426.11,691.31 426.58,691.34 427.05,691.38 427.52,691.41 427.99,691.44 428.46,691.47 428.92,691.49 429.39,691.52 429.86,691.54 430.33,691.56 430.80,691.58 431.27,691.60 431.74,691.62 432.21,691.63 432.67,691.65 433.14,691.66 433.61,691.67 434.08,691.68 434.55,691.69 435.02,691.70 435.49,691.71 435.96,691.72 436.42,691.73 436.89,691.73 437.36,691.74 437.83,691.75 438.30,691.75 438.77,691.75 439.24,691.76 439.71,691.76 440.17,691.77 440.64,691.77 441.11,691.77 441.58,691.77 442.05,691.77 442.52,691.78 442.99,691.78 443.46,691.78 443.92,691.78 444.39,691.78 444.86,691.78 445.33,691.78 445.80,691.78 446.27,691.78 446.74,691.78 447.21,691.79 447.67,691.79 448.14,691.79 448.61,691.79 449.08,691.79 449.55,691.79 450.02,691.79 450.49,691.79 450.96,691.79 451.42,691.79 451.89,691.79 452.36,691.79 452.83,691.79 453.30,691.79 453.77,691.79 454.24,691.79 454.71,691.79 455.17,691.79 455.64,691.79 456.11,691.79 456.58,691.79 457.05,691.79 457.52,691.79 457.99,691.79 458.46,691.79 458.92,691.79 459.39,691.79 459.86,691.78 460.33,691.78 460.80,691.78 461.27,691.77 461.74,691.77 462.21,691.77 462.67,691.76 463.14,691.75 463.61,691.75 464.08,691.74 464.55,691.73 465.02,691.72 465.49,691.71 465.96,691.70 466.42,691.69 466.89,691.67 467.36,691.66 467.83,691.64 468.30,691.63 468.77,691.61 469.24,691.59 469.71,691.57 470.17,691.54 470.64,691.52 471.11,691.49 471.58,691.46 472.05,691.43 472.52,691.40 472.99,691.37 473.46,691.33 473.92,691.29 474.39,691.25 474.86,691.21 475.33,691.16 475.80,691.11 476.27,691.06 476.74,691.01 477.21,690.95 477.67,690.89 478.14,690.82 478.61,690.76 479.08,690.69 479.55,690.61 480.02,690.54 480.49,690.46 480.96,690.37 481.42,690.28 481.89,690.19 482.36,690.10 482.83,690.00 483.30,689.89 483.77,689.78 484.24,689.67 484.71,689.55 485.17,689.42 485.64,689.30 486.11,689.16 486.58,689.02 487.05,688.88 487.52,688.73 487.99,688.57 488.46,688.41 488.92,688.24 489.39,688.07 489.86,687.89 490.33,687.70 490.80,687.51 491.27,687.31 491.74,687.10 492.21,686.89 492.67,686.67 493.14,686.44 493.61,686.21 494.08,685.96 494.55,685.71 495.02,685.45 495.49,685.19 495.96,684.91 496.42,684.63 496.89,684.33 497.36,684.03 497.83,683.72 498.30,683.40 498.77,683.07 499.24,682.74 499.71,682.39 500.17,682.03 500.64,681.66 501.11,681.28 501.58,680.89 502.05,680.49 502.52,680.08 502.99,679.66 503.46,679.23 503.92,678.78 504.39,678.33 504.86,677.86 505.33,677.38 505.80,676.89 506.27,676.38 506.74,675.87 507.21,675.34 507.67,674.79 508.14,674.24 508.61,673.67 509.08,673.08 509.55,672.48 510.02,671.87 510.49,671.25 510.96,670.60 511.42,669.95 511.89,669.28 512.36,668.59 512.83,667.89 513.30,667.17 513.77,666.44 514.24,665.69 514.71,664.92 515.17,664.14 515.64,663.34 516.11,662.52 516.58,661.68 517.05,660.83 517.52,659.96 517.99,659.07 518.46,658.17 518.92,657.24 519.39,656.29 519.86,655.33 520.33,654.35 520.80,653.34 521.27,652.32 521.74,651.28 522.21,650.21 522.67,649.13 523.14,648.02 523.61,646.89 524.08,645.74 524.55,644.57 525.02,643.38 525.49,642.16 525.96,640.92 526.42,639.66 526.89,638.38 527.36,637.07 527.83,635.74 528.30,634.38 528.77,633.00 529.24,631.59 529.71,630.16 530.17,628.71 530.64,627.23 531.11,625.72 531.58,624.19 532.05,622.63 532.52,621.04 532.99,619.42 533.46,617.78 533.92,616.11 534.39,614.42 534.86,612.69 535.33,610.93 535.80,609.15 536.27,607.34 536.74,605.50 537.21,603.62 537.67,601.72 538.14,599.79 538.61,597.82 539.08,595.83 539.55,593.80 540.02,591.74 540.49,589.65 540.96,587.53 541.42,585.37 541.89,583.18 542.36,580.95 542.83,578.70 543.30,576.40" fill="none" stroke="#33ee33" stroke-width="0.9"/><line x1="509" y1="577" x2="532.7" y2="577" stroke="#8080ff" stroke-width="1"/><line x1="509" y1="587.2" x2="532.7" y2="587.2" stroke="#ff4040" stroke-width="0.8"/><line x1="509" y1="597.5" x2="532.7" y2="597.5" stroke="#33ee33" stroke-width="0.9"/></svg>
<div class="t" style="left:347.8px;top:571.90px;font-size:9.1px;color:#000;transform-origin:100% 0;transform:translateX(-100%) scaleX(0.93);">10000</div>
<div class="t" style="left:347.8px;top:595.00px;font-size:9.1px;color:#000;transform-origin:100% 0;transform:translateX(-100%) scaleX(0.93);">8000</div>
<div class="t" style="left:347.8px;top:618.10px;font-size:9.1px;color:#000;transform-origin:100% 0;transform:translateX(-100%) scaleX(0.93);">6000</div>
<div class="t" style="left:347.8px;top:641.20px;font-size:9.1px;color:#000;transform-origin:100% 0;transform:translateX(-100%) scaleX(0.93);">4000</div>
<div class="t" style="left:502px;top:573.00px;font-size:9.1px;color:#000;transform-origin:100% 0;transform:translateX(-100%) scaleX(0.93);">x^2</div>
<div class="t" style="left:502px;top:583.20px;font-size:9.1px;color:#000;transform-origin:100% 0;transform:translateX(-100%) scaleX(0.93);">x^3</div>
<div class="t" style="left:502px;top:593.50px;font-size:9.1px;color:#000;transform-origin:100% 0;transform:translateX(-100%) scaleX(0.93);">x^4-x+1</div>
</div>
<div class="a" style="left:0;top:89px;width:1248px;height:555px;overflow:hidden">
<svg style="left:0px;top:-89px;" width="1248" height="702" viewBox="0 0 1248 702"><line x1="882" y1="90.5" x2="889.5" y2="90.5" stroke="#808080" stroke-width="1"/><line x1="882" y1="92.5" x2="889.5" y2="92.5" stroke="#808080" stroke-width="1"/><line x1="889" y1="92.5" x2="889" y2="110.3" stroke="#a0a0a0" stroke-width="1.2"/><line x1="882" y1="110.3" x2="889.5" y2="110.3" stroke="#808080" stroke-width="1"/><line x1="882" y1="112.5" x2="889.5" y2="112.5" stroke="#808080" stroke-width="1"/><line x1="889" y1="112.5" x2="889" y2="127.1" stroke="#a0a0a0" stroke-width="1.2"/><line x1="882" y1="127.1" x2="889.5" y2="127.1" stroke="#808080" stroke-width="1"/><path d="M882.5 129.3 H889 V135.3 Z" fill="none" stroke="#606060" stroke-width="0.8"/><line x1="889" y1="129.3" x2="889" y2="156.4" stroke="#a0a0a0" stroke-width="1.2"/><line x1="882" y1="156.4" x2="889.5" y2="156.4" stroke="#808080" stroke-width="1"/><path d="M882.5 158.60000000000002 H889 V164.60000000000002 Z" fill="none" stroke="#606060" stroke-width="0.8"/><line x1="889" y1="158.60000000000002" x2="889" y2="185.70000000000002" stroke="#a0a0a0" stroke-width="1.2"/><line x1="882" y1="185.70000000000002" x2="889.5" y2="185.70000000000002" stroke="#808080" stroke-width="1"/><path d="M882.5 187.9 H889 V193.9 Z" fill="none" stroke="#606060" stroke-width="0.8"/><line x1="889" y1="187.9" x2="889" y2="215.0" stroke="#a0a0a0" stroke-width="1.2"/><line x1="882" y1="215.0" x2="889.5" y2="215.0" stroke="#808080" stroke-width="1"/><path d="M882.5 217.20000000000002 H889 V223.20000000000002 Z" fill="none" stroke="#606060" stroke-width="0.8"/><line x1="889" y1="217.20000000000002" x2="889" y2="244.3" stroke="#a0a0a0" stroke-width="1.2"/><line x1="882" y1="244.3" x2="889.5" y2="244.3" stroke="#808080" stroke-width="1"/><path d="M882.5 246.5 H889 V252.5 Z" fill="none" stroke="#606060" stroke-width="0.8"/><line x1="889" y1="246.5" x2="889" y2="273.6" stroke="#a0a0a0" stroke-width="1.2"/><line x1="882" y1="273.6" x2="889.5" y2="273.6" stroke="#808080" stroke-width="1"/><line x1="882" y1="275.9" x2="889.5" y2="275.9" stroke="#808080" stroke-width="1"/><line x1="889" y1="275.9" x2="889" y2="293.2" stroke="#a0a0a0" stroke-width="1.2"/><line x1="882" y1="293.2" x2="889.5" y2="293.2" stroke="#808080" stroke-width="1"/><line x1="882" y1="296.3" x2="889.5" y2="296.3" stroke="#808080" stroke-width="1"/><line x1="889" y1="296.3" x2="889" y2="341.1" stroke="#a0a0a0" stroke-width="1.2"/><line x1="882" y1="341.1" x2="889.5" y2="341.1" stroke="#808080" stroke-width="1"/><path d="M882.5 343.9 H889 V349.9 Z" fill="none" stroke="#606060" stroke-width="0.8"/><line x1="889" y1="343.9" x2="889" y2="542.2" stroke="#a0a0a0" stroke-width="1.2"/><line x1="882" y1="542.2" x2="889.5" y2="542.2" stroke="#808080" stroke-width="1"/><path d="M882.5 545 H889 V551 Z" fill="none" stroke="#606060" stroke-width="0.8"/><line x1="889" y1="545" x2="889" y2="700" stroke="#a0a0a0" stroke-width="1.2"/><line x1="882" y1="700" x2="889.5" y2="700" stroke="#808080" stroke-width="1"/></svg>
</div>
<div class="a" style="left:893px;top:90px;width:1px;height:554px;background:#e6e6e6;"></div>
<div class="a" style="left:896.3px;top:338.9px;width:5.6px;height:86.3px;background:#a9d5f3;border-radius:3px"></div>
<div class="t" style="left:913px;top:91.20px;font-size:8.2px;color:#1c1e21;transform-origin:0 0;transform:scaleX(0.9);">Maxima Notebook</div>
<svg style="left:1121px;top:90.8px;" width="6" height="6" viewBox="0 0 6 6"><path d="M3 0.4 L5.6 3 L3 5.6 L0.4 3 Z" fill="none" stroke="#3a3b3d" stroke-width="0.6"/></svg>
<svg style="left:1131.8px;top:89.2px;" width="9" height="9" viewBox="0 0 9 9"><circle cx="4.4" cy="4.4" r="4.3" fill="#7d7e80"/><path d="M2.6 2.6 L6.2 6.2 M6.2 2.6 L2.6 6.2" stroke="#eff0f1" stroke-width="1"/></svg>
<div class="a" style="left:911.3px;top:102.2px;width:231.7px;height:544.3px;background:#fcfcfc;border:1px solid #8fcdf1;border-radius:1.5px"></div>
<div class="a" style="left:915.2px;top:122.3px;width:223.4px;height:519.3px;background:#f3f4f3;border:1px solid #cbcccd;border-radius:1px"></div>
<div class="a" style="left:958.4px;top:107.1px;width:163.3px;height:15.2px;background:#dcdddf;"></div>
<div class="a" style="left:1019.6px;top:107.1px;width:0.9px;height:15.2px;background:#c8c9cb;"></div>
<div class="a" style="left:1063.4px;top:107.1px;width:0.9px;height:15.2px;background:#c8c9cb;"></div>
<div class="a" style="left:1121.7px;top:107.1px;width:17px;height:15.2px;background:#ebeced;"></div>
<div class="a" style="left:915.2px;top:107.1px;width:43.2px;height:16px;background:#f3f4f3;border-left:1px solid #cbcccd;border-right:1px solid #cbcccd"></div>
<div class="a" style="left:915.2px;top:107px;width:43.2px;height:1.6px;background:#3daee9;"></div>
<div class="t" style="left:924px;top:111.60px;font-size:8.2px;color:#1c1e21;transform-origin:0 0;transform:scaleX(0.9);">General</div>
<div class="t" style="left:963px;top:111.60px;font-size:8.2px;color:#1c1e21;transform-origin:0 0;transform:scaleX(0.9);">Dokumentation</div>
<div class="t" style="left:1033.8px;top:111.60px;font-size:8.2px;color:#1c1e21;transform-origin:0 0;transform:scaleX(0.9);">Hilfe</div>
<div class="t" style="left:1067.2px;top:111.60px;font-size:8.2px;color:#1c1e21;transform-origin:0 0;transform:scaleX(0.9);">Inhaltsverzeichn</div>
<svg style="left:1124.4px;top:112.6px;" width="4" height="6" viewBox="0 0 4 6"><path d="M3 0.5 L0.8 3 L3 5.5" fill="none" stroke="#b0b1b3" stroke-width="0.8"/></svg>
<svg style="left:1132.6px;top:112.6px;" width="4" height="6" viewBox="0 0 4 6"><path d="M0.8 0.5 L3 3 L0.8 5.5" fill="none" stroke="#232629" stroke-width="0.8"/></svg>
<div class="t" style="left:920.4px;top:133.00px;font-size:8.2px;color:#1c1e21;transform-origin:0 0;transform:scaleX(0.9);">Name:</div>
<div class="t" style="left:920.4px;top:153.70px;font-size:8.2px;color:#1c1e21;transform-origin:0 0;transform:scaleX(0.9);">Comment:</div>
<div class="a" style="left:969px;top:128.5px;width:164.4px;height:15.5px;background:#fcfcfc;border:1px solid #c3c4c6;border-radius:2px"></div>
<div class="a" style="left:969px;top:148.5px;width:164.4px;height:16px;background:#fcfcfc;border:1px solid #c3c4c6;border-radius:2px"></div>
<div class="t" style="left:972.5px;top:133.00px;font-size:8.2px;color:#1c1e21;transform-origin:0 0;transform:scaleX(0.9);">Maxima</div>
<div class="a" style="left:921px;top:179.2px;width:103.6px;height:17px;background:#f3f4f4;border:1px solid #bfc0c2;border-radius:2px;box-shadow:0 0.5px 0.5px rgba(0,0,0,0.1)"></div>
<div class="a" style="left:1029.2px;top:179.2px;width:104.2px;height:17px;background:#f3f4f4;border:1px solid #bfc0c2;border-radius:2px;box-shadow:0 0.5px 0.5px rgba(0,0,0,0.1)"></div>
<svg style="left:935px;top:184px;" width="7" height="7" viewBox="0 0 7 7"><rect x="0.5" y="0.5" width="6" height="6" fill="none" stroke="#232629" stroke-width="0.9"/><rect x="0.5" y="0.5" width="6" height="1.3" fill="#232629"/><path d="M2.5 2.8 L4.6 4 L2.5 5.2 Z" fill="#232629"/></svg>
<div class="t" style="left:945.5px;top:184.60px;font-size:8.2px;color:#1c1e21;transform-origin:0 0;transform:scaleX(0.9);">Evaluate Worksheet</div>
<svg style="left:1049px;top:184px;" width="8" height="8" viewBox="0 0 8 8"><path d="M1.2 4.5 A3 3 0 0 1 6.3 1.8" fill="none" stroke="#232629" stroke-width="0.9"/><path d="M6.6 3 A3 3 0 0 1 1.5 5.8" fill="none" stroke="#232629" stroke-width="0.9"/></svg>
<div class="t" style="left:1059.5px;top:184.60px;font-size:8.2px;color:#1c1e21;transform-origin:0 0;transform:scaleX(0.9);">Restart Backend</div>
<div class="t" style="left:107px;top:651.00px;font-size:8.2px;color:#1c1e21;transform-origin:0 0;transform:scaleX(0.883);">Project successfully opened (in 0,405 seconds).</div>
<div class="t" style="left:1144px;top:652.00px;font-size:8.2px;color:#1c1e21;transform-origin:100% 0;transform:translateX(-100%) scaleX(0.9);">Memory used 192 MB, peak 192 MB</div>
</body></html>
